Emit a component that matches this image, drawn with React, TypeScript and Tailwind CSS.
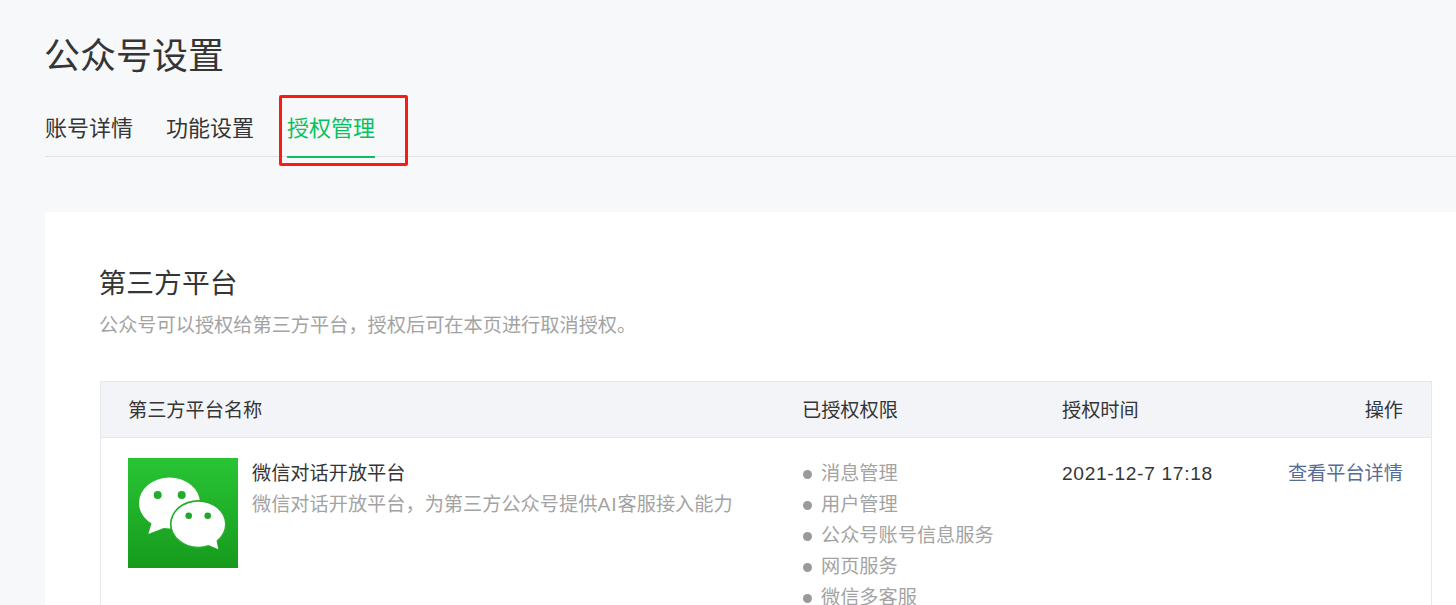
const FONT = { fontFamily: '"Liberation Sans", "Noto Sans CJK SC", sans-serif' };

const PERMISSIONS = ["消息管理", "用户管理", "公众号账号信息服务", "网页服务", "微信多客服"];

function WeChatLogo() {
  return (
    <svg viewBox="0 0 110 110" className="w-[110px] h-[110px] shrink-0 block">
      <defs>
        <linearGradient id="wxbg" x1="0" y1="0" x2="0" y2="1">
          <stop offset="0" stopColor="#29c535" />
          <stop offset="1" stopColor="#169a1c" />
        </linearGradient>
      </defs>
      <rect width="110" height="110" fill="url(#wxbg)" />
      <ellipse cx="41.500" cy="45" rx="30.500" ry="25.500" fill="#fff" />
      <path d="M24 64 L20.300 76 L37 69.500 Z" fill="#fff" />
      <ellipse cx="70.300" cy="66.200" rx="28.400" ry="24.200" fill="#23ae2c" />
      <ellipse cx="70.300" cy="66.200" rx="26.700" ry="22.500" fill="#fff" />
      <path d="M78 86 L90.300 91.300 L88 80 Z" fill="#fff" />
      <circle cx="29.700" cy="37" r="4" fill="#22ad2c" />
      <circle cx="53.700" cy="37" r="4" fill="#22ad2c" />
      <circle cx="60.700" cy="57.700" r="3.300" fill="#1fa828" />
      <circle cx="79.700" cy="57.700" r="3.300" fill="#1fa828" />
    </svg>
  );
}

export default function App() {
  return (
    <div className="relative h-[605px] overflow-hidden bg-[#f6f8f9] pt-[33px] pl-[45px]" style={FONT}>
      {/* Header */}
      <h1 className="-ml-px text-[36px] leading-[47px] font-normal text-[#353535]">公众号设置</h1>

      {/* Tabs */}
      <div className="mt-[16px] flex h-[61px] border-b border-[#e0e2e6] text-[22px] leading-[66px] text-[#353535]">
        <span className="mr-[33px]">账号详情</span>
        <span className="mr-[33px]">功能设置</span>
        <span className="h-[62px] border-b-2 border-[#07c160] text-[#07c160]">授权管理</span>
      </div>

      {/* Highlight drawn over the screenshot */}
      <div className="absolute left-[279px] top-[95px] h-[71px] w-[129px] rounded-[2px] border-[3px] border-[#fa1b12]" />

      {/* Card */}
      <div className="mt-[55px] h-[500px] rounded-tl-[2px] bg-white pl-[55px] pt-[52px]">
        <h2 className="-ml-[1.500px] text-[27.800px] leading-[40px] font-normal text-[#353535]">第三方平台</h2>
        <p className="mt-[9px] -ml-px text-[19.200px] leading-[26px] text-[#a3a3a3]">公众号可以授权给第三方平台，授权后可在本页进行取消授权。</p>

        <div className="mt-[42px] w-[1332px] border border-[#e6e8ec] text-[19.200px]">
          <div className="flex h-[56px] items-center border-b border-[#e6e8ec] bg-[#f2f4f8] pt-[4px] text-[#353535]">
            <div className="w-[701px] pl-[27px]">第三方平台名称</div>
            <div className="w-[260px]">已授权权限</div>
            <div className="w-[200px]">授权时间</div>
            <div className="w-[141px] text-right">操作</div>
          </div>

          <div className="flex pt-[20px]">
            <div className="flex w-[701px] pl-[27px]">
              <WeChatLogo />
              <div className="ml-[14px]">
                <div className="mt-[3px] leading-[26px] text-[#353535]">微信对话开放平台</div>
                <div className="mt-[5px] leading-[26px] text-[#a3a3a3]">
                  微信对话开放平台，为第三方公众号提供<span className="tracking-[1px]">AI</span>客服接入能力
                </div>
              </div>
            </div>
            <ul className="mt-px w-[260px] text-[#a3a3a3]">
              {PERMISSIONS.map(p => (
                <li key={p} className="flex h-[31px] items-center pl-px">
                  <span className="mr-[9px] h-[9px] w-[9px] rounded-full bg-[#9a9a9a]" />
                  {p}
                </li>
              ))}
            </ul>
            <div className="w-[200px] leading-[31px] tracking-[0.670px] text-[#353535]">2021-12-7 17:18</div>
            <div className="w-[141px] text-right leading-[31px] text-[#576b95]">查看平台详情</div>
          </div>
        </div>
      </div>
    </div>
  );
}
